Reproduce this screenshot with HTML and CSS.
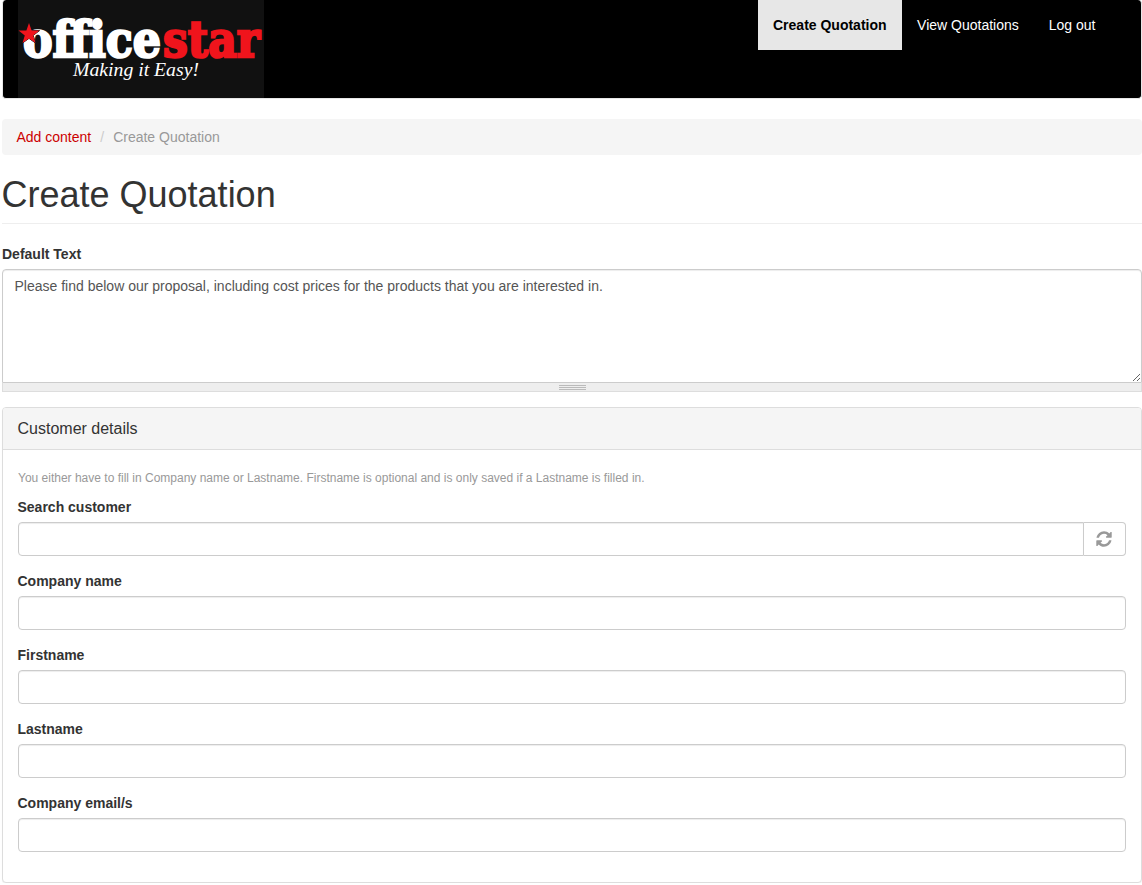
FILE: index.html
```html
<!DOCTYPE html>
<html lang="en">
<head>
  <meta charset="UTF-8">
  <title>Create Quotation</title>
  <link rel="stylesheet" href="styles.css">
</head>
<body>
  <div class="navbar">
    <a class="logo" href="#">
      <svg width="246" height="98" viewBox="0 0 246 98">
        <text class="logo-word" x="5" y="56.500" textLength="138" lengthAdjust="spacingAndGlyphs">office</text>
        <text class="logo-word logo-red" x="145" y="56.500" textLength="97" lengthAdjust="spacingAndGlyphs">star</text>
        <polygon class="logo-star" points="11,23 13.600,30.600 21.500,30.600 15.200,35.400 17.500,43 11,38.400 4.500,43 6.800,35.400 0.500,30.600 8.400,30.600"/>
        <text class="logo-tag" x="55" y="76" textLength="126" lengthAdjust="spacingAndGlyphs">Making it Easy!</text>
      </svg>
    </a>
    <ul class="nav">
      <li class="active"><a href="#">Create Quotation</a></li>
      <li><a href="#">View Quotations</a></li>
      <li><a href="#">Log out</a></li>
    </ul>
  </div>

  <ol class="breadcrumb">
    <li><a href="#">Add content</a></li>
    <li class="sep">/</li>
    <li class="current">Create Quotation</li>
  </ol>

  <h1 class="page-header">Create Quotation</h1>

  <div class="form-group">
    <label class="label-top" for="default-text">Default Text</label>
    <textarea class="form-control text-area" id="default-text">Please find below our proposal, including cost prices for the products that you are interested in.</textarea>
    <div class="grippie"><span></span></div>
  </div>

  <div class="panel">
    <div class="panel-heading">Customer details</div>
    <div class="panel-body">
      <p class="help-block">You either have to fill in Company name or Lastname. Firstname is optional and is only saved if a Lastname is filled in.</p>
      <div class="form-group">
        <label for="search">Search customer</label>
        <div class="input-group">
          <input class="form-control" id="search" type="text">
          <span class="addon">
            <svg width="18" height="18" viewBox="0 0 1792 1792"><path d="M1639 1056q0 5-1 7-64 268-268 434.500t-478 166.500q-146 0-282.500-55t-243.500-157l-129 129q-19 19-45 19t-45-19-19-45v-448q0-26 19-45t45-19h448q26 0 45 19t19 45-19 45l-137 137q71 66 161 102t187 36q134 0 250-65t186-179q11-17 53-117 8-23 30-23h192q13 0 22.500 9.500t9.500 22.500zm25-800v448q0 26-19 45t-45 19h-448q-26 0-45-19t-19-45 19-45l138-138q-148-137-349-137-134 0-250 65t-186 179q-11 17-53 117-8 23-30 23h-199q-13 0-22.500-9.500t-9.500-22.500v-7q65-268 270-434.500t480-166.500q146 0 284 55.500t245 156.500l130-129q19-19 45-19t45 19 19 45z"/></svg>
          </span>
        </div>
      </div>
      <div class="form-group">
        <label for="company">Company name</label>
        <input class="form-control" id="company" type="text">
      </div>
      <div class="form-group">
        <label for="firstname">Firstname</label>
        <input class="form-control" id="firstname" type="text">
      </div>
      <div class="form-group">
        <label for="lastname">Lastname</label>
        <input class="form-control" id="lastname" type="text">
      </div>
      <div class="form-group">
        <label for="email">Company email/s</label>
        <input class="form-control" id="email" type="text">
      </div>
    </div>
  </div>
</body>
</html>
```

FILE: styles.css
```css
* {
  box-sizing: border-box;
}

html, body {
  margin: 0;
  background-color: #fff;
}

body {
  padding-left: 1.5px;
  font-family: "Liberation Sans", Arial, sans-serif;
  font-size: 14px;
  line-height: 20px;
  color: #333;
  overflow: hidden;
}

a {
  text-decoration: none;
}

.navbar {
  display: flex;
  justify-content: space-between;
  align-items: flex-start;
  height: 99px;
  margin-bottom: 20px;
  padding: 0 30.500px 0 15.500px;
  background-color: #000;
  border: 1px solid #e7e7e7;
  border-top: 0;
  border-radius: 4px;
}

.logo {
  display: block;
  width: 246px;
  height: 98px;
  background-color: #111;
}

.logo svg {
  display: block;
  overflow: visible;
}

.logo-word {
  font-family: "DejaVu Serif", serif;
  font-weight: bold;
  font-size: 50px;
  fill: #fff;
  stroke: #fff;
  stroke-width: 2.500px;
}

.logo-red {
  fill: #f0141c;
  stroke: #f0141c;
}

.logo-star {
  fill: #f0141c;
  stroke: #111;
  stroke-width: 1px;
  paint-order: stroke;
}

.logo-tag {
  font-family: "Liberation Serif", serif;
  font-style: italic;
  font-size: 18px;
  fill: #fff;
}

.nav {
  display: flex;
  margin: 0;
  padding: 0;
  list-style: none;
}

.nav a {
  display: block;
  padding: 15px;
  color: #fff;
}

.nav .active {
  margin-right: 0.500px;
}

.nav .active a {
  background-color: #e7e7e7;
  color: #000;
  font-weight: bold;
}

.breadcrumb {
  display: flex;
  height: 36px;
  margin: 0 0 20px;
  padding: 8px 15px;
  list-style: none;
  background-color: #f5f5f5;
  border-radius: 4px;
}

.breadcrumb a {
  color: #c00;
}

.sep {
  padding: 0 9px;
  color: #ccc;
}

.current {
  color: #999;
}

.page-header {
  margin: 0 0 20px;
  padding-bottom: 9px;
  border-bottom: 1px solid #eee;
  font-size: 36px;
  font-weight: 500;
  line-height: 39px;
}

.form-group {
  margin-bottom: 15px;
}

label {
  display: block;
  margin-bottom: 5px;
  font-weight: bold;
}

.label-top {
  padding-left: 0.500px;
}

.form-control {
  display: block;
  width: 100%;
  height: 34px;
  padding: 6px 12px;
  font: inherit;
  color: #555;
  background-color: #fff;
  border: 1px solid #ccc;
  border-radius: 4px;
  box-shadow: inset 0 1px 1px rgba(0, 0, 0, 0.075);
}

.text-area {
  height: 114px;
  border-bottom-left-radius: 0;
  border-bottom-right-radius: 0;
  resize: both;
}

.grippie {
  display: flex;
  justify-content: center;
  align-items: center;
  height: 9px;
  padding-left: 2px;
  background-color: #eee;
  border: 1px solid #ddd;
  border-top: 0;
}

.grippie span {
  display: block;
  width: 27px;
  height: 5px;
  border-top: 1px solid #bbb;
  border-bottom: 1px solid #bbb;
  background: linear-gradient(#bbb, #bbb) center / 100% 1px no-repeat;
}

.panel {
  background-color: #fff;
  border: 1px solid #ddd;
  border-radius: 4px;
  box-shadow: 0 1px 1px rgba(0, 0, 0, 0.05);
}

.panel-heading {
  height: 42px;
  padding: 11px 15px 9px;
  font-size: 16px;
  background-color: #f5f5f5;
  border-bottom: 1px solid #ddd;
  border-radius: 3px 3px 0 0;
}

.panel-body {
  padding: 15px;
}

.help-block {
  margin: 5px 0 10px;
  padding-left: 0.500px;
  font-size: 12px;
  line-height: 17px;
  color: #999;
}

.input-group {
  display: flex;
}

.input-group .form-control {
  border-radius: 4px 0 0 4px;
}

.addon {
  display: flex;
  flex: none;
  justify-content: center;
  align-items: center;
  width: 42px;
  height: 34px;
  padding-right: 2px;
  background-color: #fff;
  border: 1px solid #ccc;
  border-left: 0;
  border-radius: 0 4px 4px 0;
}

.addon svg {
  fill: #999;
}
```
